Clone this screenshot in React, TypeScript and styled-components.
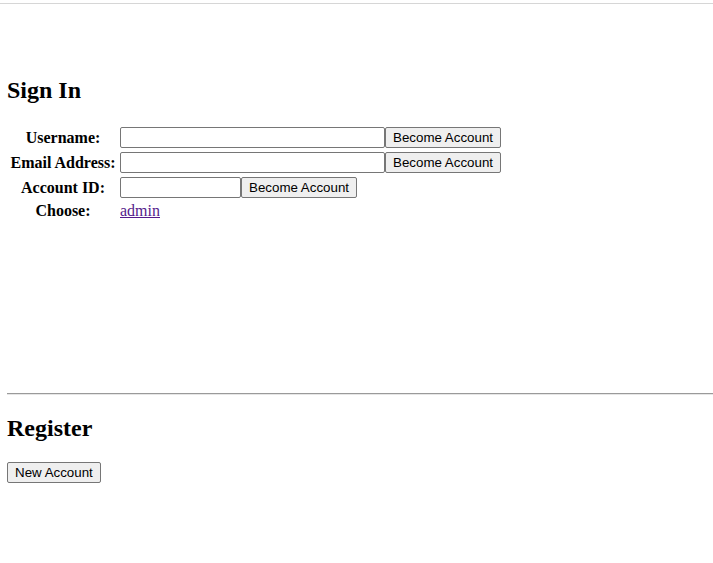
import React from "react";
import styled, { createGlobalStyle } from "styled-components";

const Global = createGlobalStyle`
  html, body { margin: 0; padding: 0; background: #fff; }
  body { font-family: "Liberation Serif", "Times New Roman", serif; font-size: 16px; color: #000; overflow: hidden; }
`;

const TopRule = styled.div`
  margin-top: 3px;
  height: 1px;
  background: #d6d6d6;
`;

const Page = styled.div`
  padding: 0 0 0 7px;
`;

const Section = styled.section<{ $minHeight?: number }>`
  display: flex;
  flex-direction: column;
  align-items: flex-start;
  min-height: ${(p) => (p.$minHeight ? `${p.$minHeight}px` : "auto")};
`;

const Heading = styled.h2<{ $top: number; $bottom: number }>`
  font-size: 24px;
  font-weight: bold;
  line-height: 27px;
  margin: ${(p) => p.$top}px 0 ${(p) => p.$bottom}px 0;
`;

const FormGrid = styled.div`
  display: grid;
  grid-template-columns: 106px auto;
  column-gap: 4px;
  row-gap: 4px;
  padding-left: 3px;
  align-items: center;
`;

const Label = styled.div`
  font-weight: bold;
  text-align: center;
  line-height: 18px;
`;

const Field = styled.div`
  display: flex;
  align-items: center;
  line-height: 18px;
`;

const TextInput = styled.input<{ $width: number }>`
  box-sizing: border-box;
  width: ${(p) => p.$width}px;
  height: 21px;
  margin: 0;
  padding: 1px 2px;
  border: 1px solid #767676;
  border-radius: 2px;
  background: #fff;
  font-family: "Liberation Sans", Arial, sans-serif;
  font-size: 13.33px;
`;

const Button = styled.button`
  box-sizing: border-box;
  height: 21px;
  margin: 0;
  padding: 1px 7px;
  border: 1px solid #767676;
  border-radius: 2px;
  background: #efefef;
  color: #000;
  font-family: "Liberation Sans", Arial, sans-serif;
  font-size: 13.33px;
  line-height: 17px;
  white-space: nowrap;
`;

const Link = styled.a`
  color: #551a8b;
  text-decoration: underline;
`;

const Rule = styled.hr`
  box-sizing: border-box;
  width: 100%;
  height: 2px;
  margin: 8px 0 0 0;
  border: none;
  border-top: 1px solid #9a9a9a;
  border-bottom: 1px solid #e6e6e6;
`;

const rows = [
  { label: "Username:", width: 265 },
  { label: "Email Address:", width: 265 },
  { label: "Account ID:", width: 121 },
];

export default function App() {
  return (
    <>
      <Global />
      <TopRule />
      <Page>
        <Section $minHeight={381}>
          <Heading $top={73} $bottom={23}>Sign In</Heading>
          <FormGrid>
            {rows.map((r) => (
              <React.Fragment key={r.label}>
                <Label>{r.label}</Label>
                <Field>
                  <TextInput type="text" $width={r.width} />
                  <Button type="button">Become Account</Button>
                </Field>
              </React.Fragment>
            ))}
            <Label>Choose:</Label>
            <Field>
              <Link href="#">admin</Link>
            </Field>
          </FormGrid>
        </Section>
        <Rule />
        <Section>
          <Heading $top={20} $bottom={20}>Register</Heading>
          <Button type="button">New Account</Button>
        </Section>
      </Page>
    </>
  );
}
